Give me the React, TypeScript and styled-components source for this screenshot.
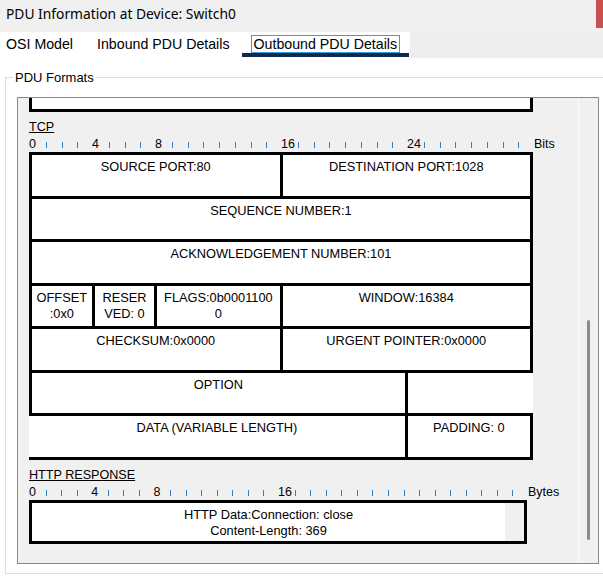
import { Fragment } from 'react';
import styled, { createGlobalStyle } from 'styled-components';

type Field = {
  lines: string[];
  span: number;
  open?: 'left' | 'right';
};

type RulerProps = {
  width: number;
  marks: number[];
  unit: string;
};

const tcpFields: Field[] = [
  { lines: ['SOURCE PORT:80'], span: 16 },
  { lines: ['DESTINATION PORT:1028'], span: 16 },
  { lines: ['SEQUENCE NUMBER:1'], span: 32 },
  { lines: ['ACKNOWLEDGEMENT NUMBER:101'], span: 32 },
  { lines: ['OFFSET', ':0x0'], span: 4 },
  { lines: ['RESER', 'VED: 0'], span: 4 },
  { lines: ['FLAGS:0b0001100', '0'], span: 8 },
  { lines: ['WINDOW:16384'], span: 16 },
  { lines: ['CHECKSUM:0x0000'], span: 16 },
  { lines: ['URGENT POINTER:0x0000'], span: 16 },
  { lines: ['OPTION'], span: 24 },
  { lines: [], span: 8, open: 'right' },
  { lines: ['DATA (VARIABLE LENGTH)'], span: 24, open: 'left' },
  { lines: ['PADDING: 0'], span: 8 },
];

const httpLines = ['HTTP Data:Connection: close', 'Content-Length: 369', 'Content-Type: text/html'];

const GlobalStyle = createGlobalStyle`
  html, body {
    margin: 0;
    padding: 0;
    background: #fff;
    overflow: hidden;
  }
  body {
    font-family: "Liberation Sans", Arial, sans-serif;
    color: #000;
  }
`;

const Window = styled.div`
  width: 603px;
  height: 576px;
  display: flex;
  flex-direction: column;
  background: #fff;
  overflow: hidden;
`;

const TitleBar = styled.div`
  height: 32px;
  flex: none;
  display: flex;
  justify-content: space-between;
  background: #f0f0f0;
`;

const Title = styled.div`
  padding-left: 6px;
  line-height: 27px;
  font-family: "Noto Sans", "Liberation Sans", sans-serif;
  font-size: 13.8px;
  color: #000;
`;

const CloseEdge = styled.div`
  width: 7px;
  height: 28px;
  background: #c75050;
`;

const TabStrip = styled.div`
  height: 26px;
  flex: none;
  display: flex;
  align-items: flex-start;
  background: linear-gradient(to right, #fff 410px, #eeeeee 410px);
`;

const Tab = styled.div<{ $active?: boolean }>`
  box-sizing: border-box;
  height: 25px;
  padding: 3px 12px 0;
  line-height: 18px;
  font-family: "Liberation Sans", Arial, sans-serif;
  font-size: 14.2px;
  white-space: nowrap;
  border-bottom: 4px solid ${({ $active }) => ($active ? '#13294b' : 'transparent')};

  &:first-child {
    padding-left: 6px;
  }
`;

const TabLabel = styled.span<{ $focused?: boolean }>`
  padding: 0 1px;
  margin: 0 -2px;
  outline: ${({ $focused }) => ($focused ? '1px solid #2ea3e3' : 'none')};
  border-left: 1px solid transparent;
  border-right: 1px solid transparent;
`;

const GroupBox = styled.fieldset`
  flex: none;
  margin: 12px -30px 0 5px;
  padding: 12px 0 9px 11px;
  border: 1px solid #dcdcdc;
  min-width: 0;
`;

const GroupLegend = styled.legend`
  margin-left: -4px;
  padding: 0 2px;
  font-size: 13px;
  line-height: 15px;
  color: #000;
`;

const Panel = styled.div`
  width: 582px;
  height: 467px;
  box-sizing: border-box;
  display: flex;
  border: 1px solid #8a8a8a;
  background: #f0f0f0;
`;

const Viewport = styled.div`
  flex: 1;
  overflow: hidden;
  padding-left: 11px;
`;

const ScrollTrack = styled.div`
  width: 20px;
  box-sizing: border-box;
  border-left: 1px solid #fbfbfb;
  padding: 222px 0 23px 8px;
  display: flex;
`;

const ScrollThumb = styled.div`
  width: 3px;
  border-radius: 2px;
  background: #8b8b8b;
`;

const TailBox = styled.div`
  width: 504px;
  height: 14px;
  box-sizing: border-box;
  border: 3px solid #000;
  border-top: none;
  background: #fff;
`;

const Section = styled.section`
  margin-top: 7px;
`;

const SectionTitle = styled.div`
  font-size: 12.6px;
  line-height: 16px;
  text-decoration: underline;
  color: #000;
`;

const RulerRow = styled.div`
  display: flex;
  margin-top: 2px;
  height: 14px;
  font-size: 12.5px;
  line-height: 14px;
`;

const Scale = styled.div<{ $width: number }>`
  width: ${({ $width }) => $width}px;
  display: grid;
  grid-template-columns: repeat(32, 1fr);
`;

const Slot = styled.div`
  white-space: nowrap;
`;

const Tick = styled.span`
  display: inline-block;
  width: 1px;
  height: 6px;
  margin-left: 1px;
  background: #2f7dc6;
`;

const Unit = styled.span`
  margin-left: 1px;
`;

const FieldGrid = styled.div`
  margin-top: 1px;
  width: 504px;
  height: 308px;
  box-sizing: border-box;
  display: grid;
  grid-template-columns: repeat(32, 1fr);
  grid-template-rows: repeat(7, 1fr);
  gap: 3px;
  padding: 3px;
  background: #000;
`;

const Cell = styled.div<{ $span: number; $open?: 'left' | 'right' }>`
  grid-column: span ${({ $span }) => $span};
  min-width: 0;
  padding: 4px 1px 0;
  margin-left: ${({ $open }) => ($open === 'left' ? '-3px' : '0')};
  margin-right: ${({ $open }) => ($open === 'right' ? '-3px' : '0')};
  background: #fff;
  text-align: center;
  font-size: 12.8px;
  line-height: 16px;
  white-space: nowrap;
  overflow: hidden;
`;

const DataBox = styled.div`
  margin-top: 1px;
  width: 498px;
  height: 44px;
  box-sizing: border-box;
  display: flex;
  border: 3px solid #000;
  background: #fff;
`;

const DataText = styled.div`
  flex: 1;
  overflow: hidden;
  padding-top: 3.5px;
  text-align: center;
  font-size: 12.8px;
  line-height: 16px;
  white-space: nowrap;
`;

const DataGutter = styled.div`
  width: 19px;
  background: #f0f0f0;
`;

const Ruler = ({ width, marks, unit }: RulerProps): JSX.Element => (
  <RulerRow>
    <Scale $width={width}>
      {Array.from({ length: 32 }, (_, i) => (
        <Slot key={i}>{marks.includes(i) ? i : <Tick />}</Slot>
      ))}
    </Scale>
    <Unit>{unit}</Unit>
  </RulerRow>
);

const Lines = ({ lines }: { lines: string[] }) => (
  <>
    {lines.map((line, i) => (
      <Fragment key={i}>
        {i > 0 && <br />}
        {line}
      </Fragment>
    ))}
  </>
);

const App = (): JSX.Element => (
  <Window>
    <GlobalStyle />
    <TitleBar>
      <Title>PDU Information at Device: Switch0</Title>
      <CloseEdge />
    </TitleBar>
    <TabStrip>
      <Tab>OSI Model</Tab>
      <Tab>Inbound PDU Details</Tab>
      <Tab $active>
        <TabLabel $focused>Outbound PDU Details</TabLabel>
      </Tab>
    </TabStrip>
    <GroupBox>
      <GroupLegend>PDU Formats</GroupLegend>
      <Panel>
        <Viewport>
          <TailBox />
          <Section>
            <SectionTitle>TCP</SectionTitle>
            <Ruler width={504} marks={[0, 4, 8, 16, 24]} unit="Bits" />
            <FieldGrid>
              {tcpFields.map((f, i) => (
                <Cell key={i} $span={f.span} $open={f.open}>
                  <Lines lines={f.lines} />
                </Cell>
              ))}
            </FieldGrid>
          </Section>
          <Section>
            <SectionTitle>HTTP RESPONSE</SectionTitle>
            <Ruler width={498} marks={[0, 4, 8, 16]} unit="Bytes" />
            <DataBox>
              <DataText>
                <Lines lines={httpLines} />
              </DataText>
              <DataGutter />
            </DataBox>
          </Section>
        </Viewport>
        <ScrollTrack>
          <ScrollThumb />
        </ScrollTrack>
      </Panel>
    </GroupBox>
  </Window>
);

export default App;
